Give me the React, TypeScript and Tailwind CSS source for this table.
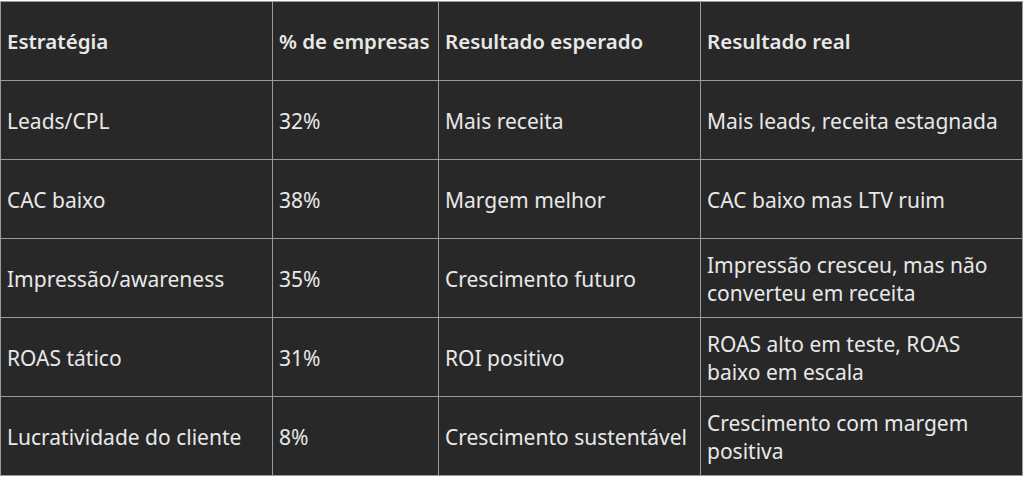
import React from "react";

const rows: [string, string, string, string][] = [
  ["Leads/CPL", "32%", "Mais receita", "Mais leads, receita estagnada"],
  ["CAC baixo", "38%", "Margem melhor", "CAC baixo mas LTV ruim"],
  ["Impressão/awareness", "35%", "Crescimento futuro", "Impressão cresceu, mas não converteu em receita"],
  ["ROAS tático", "31%", "ROI positivo", "ROAS alto em teste, ROAS baixo em escala"],
  ["Lucratividade do cliente", "8%", "Crescimento sustentável", "Crescimento com margem positiva"],
];

const headers = ["Estratégia", "% de empresas", "Resultado esperado", "Resultado real"];

export default function App() {
  return (
    <div className="w-[1024px] h-[478px] bg-white" style={{ fontFamily: '"Noto Sans", "Open Sans", sans-serif' }}>
      <table className="border-collapse table-fixed bg-[#282828] text-[#e8e8e8] text-[21px] leading-[28px] w-[1022px] mt-px">
        <colgroup>
          <col className="w-[272px]" />
          <col className="w-[166px]" />
          <col className="w-[262px]" />
          <col className="w-[322px]" />
        </colgroup>
        <thead>
          <tr className="h-[79px]">
            {headers.map((h) => (
              <th key={h} className="border border-[#9a9a9a] text-left font-semibold text-[20.5px] px-[6px] align-middle whitespace-nowrap">
                {h}
              </th>
            ))}
          </tr>
        </thead>
        <tbody>
          {rows.map((r) => (
            <tr key={r[0]} className="h-[79px]">
              {r.map((c, i) => (
                <td key={i} className="border border-[#9a9a9a] px-[6px] pt-px align-middle">
                  {c}
                </td>
              ))}
            </tr>
          ))}
        </tbody>
      </table>
    </div>
  );
}
